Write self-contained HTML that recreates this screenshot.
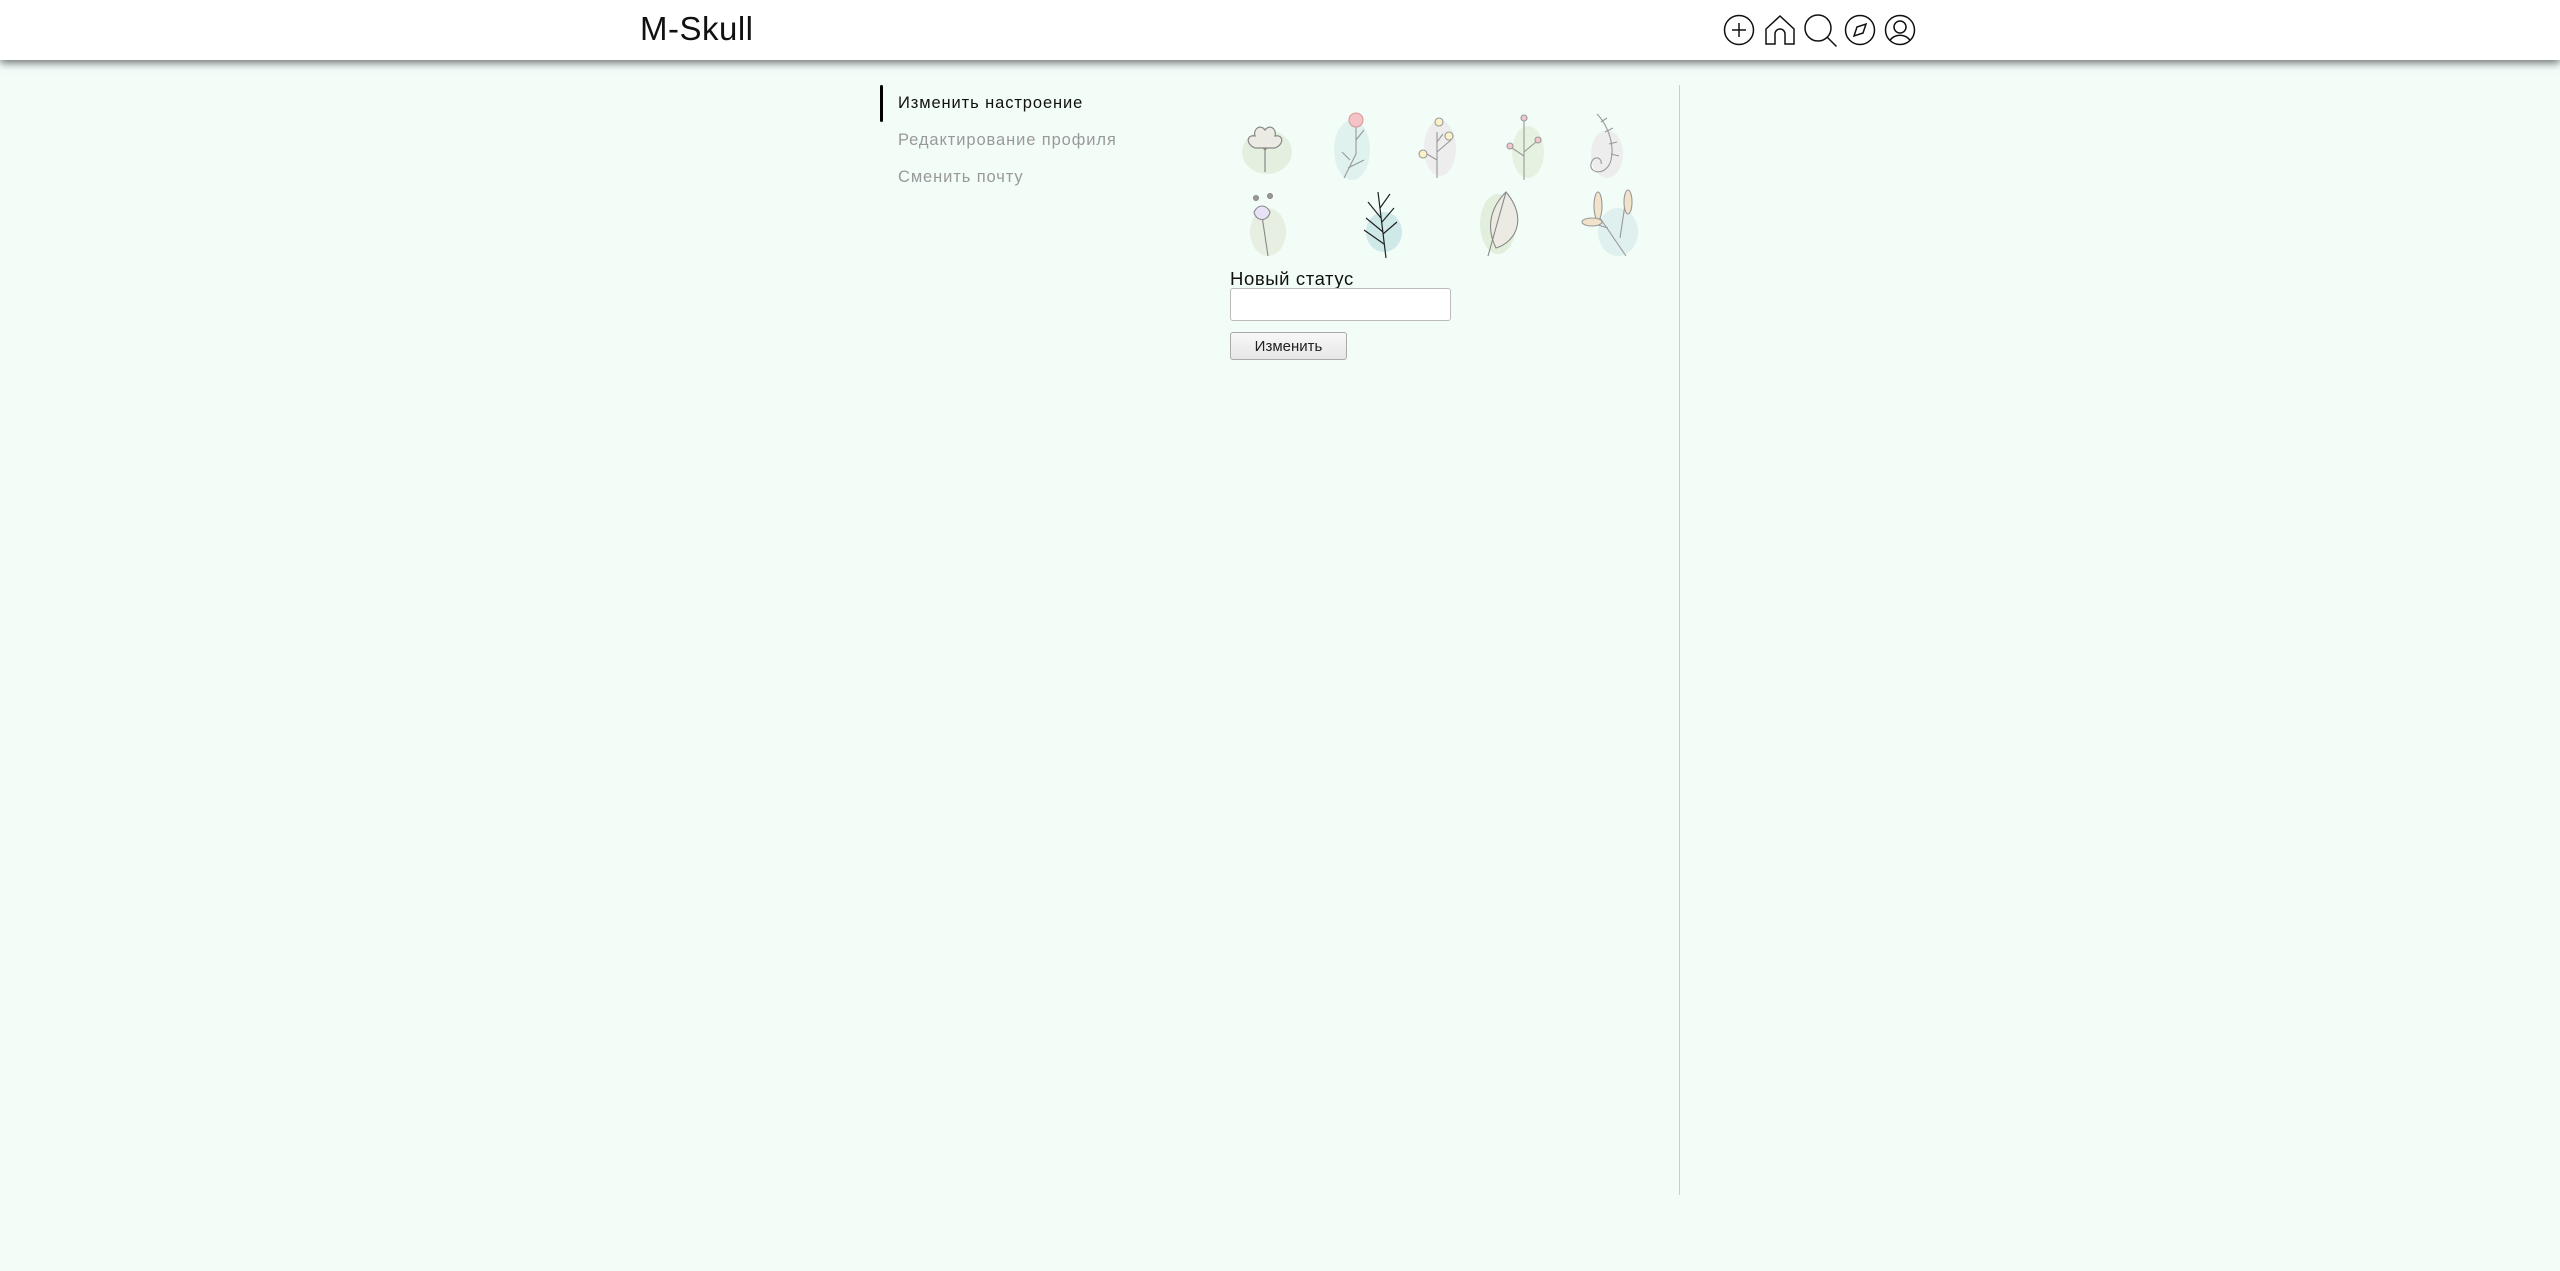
<!DOCTYPE html>
<html><head><meta charset="utf-8"><style>
*{margin:0;padding:0;box-sizing:border-box}
body{width:2560px;height:1271px;background:#f2fdf8;font-family:"Liberation Sans","DejaVu Sans",sans-serif;position:relative;overflow:hidden}
.hdr{position:absolute;left:0;top:0;width:2560px;height:60px;background:#fff;box-shadow:0 3px 8px rgba(0,0,0,.55)}
.logo{position:absolute;left:640px;top:10px;font-size:33px;color:#111;font-weight:300;letter-spacing:0.5px}
.ic{position:absolute;top:14px}
.nav{position:absolute;left:880px;top:85px;width:2.5px;height:37px;background:#000;border-radius:2px}
.it{position:absolute;left:898px;font-size:16.5px;color:#999;white-space:nowrap;letter-spacing:0.9px}
.vl{position:absolute;left:1679px;top:85px;width:1px;height:1110px;background:#ccc}
.lab{position:absolute;left:1230px;top:268px;font-size:18.5px;color:#111;letter-spacing:0.6px}
.inp{position:absolute;left:1230px;top:288px;width:221px;height:33px;background:#fff;border:1px solid #bbb;border-radius:3px}
.btn{position:absolute;left:1230px;top:332px;width:117px;height:28px;background:linear-gradient(#f8f8f8,#e6e6e6);border:1px solid #aaa;border-radius:3px;font-size:15px;color:#222;text-align:center;line-height:28px}
svg.f{position:absolute}
</style></head><body>
<div class="hdr">
<div class="logo">M-Skull</div>
<svg class="ic" style="left:1723px" width="32" height="32" viewBox="0 0 32 32" fill="none" stroke="#111" stroke-width="1.5"><circle cx="16" cy="16" r="14.5"/><path d="M16 9v14M9 16h14"/></svg>
<svg class="ic" style="left:1764px" width="32" height="32" viewBox="0 0 32 32" fill="none" stroke="#111" stroke-width="1.5"><path d="M2 15L16 2l14 13v15H21V20a5 5 0 0 0-10 0v10H2z"/></svg>
<svg class="ic" style="left:1804px" width="34" height="34" viewBox="0 0 34 34" fill="none" stroke="#111" stroke-width="1.5"><circle cx="14" cy="14" r="13"/><path d="M23.5 23.5l9 9"/></svg>
<svg class="ic" style="left:1844px" width="32" height="32" viewBox="0 0 32 32" fill="none" stroke="#111" stroke-width="1.5"><circle cx="16" cy="16" r="14.5"/><path d="M10 22l3-9 9-3-3 9z"/></svg>
<svg class="ic" style="left:1884px" width="32" height="32" viewBox="0 0 32 32" fill="none" stroke="#111" stroke-width="1.5"><circle cx="16" cy="16" r="14.5"/><circle cx="16" cy="13" r="6"/><path d="M6 26.5a11 9 0 0 1 20 0"/></svg>
</div>
<div class="nav"></div>
<div class="it" style="top:94px;color:#111">Изменить настроение</div>
<div class="it" style="top:131px">Редактирование профиля</div>
<div class="it" style="top:168px">Сменить почту</div>
<div class="vl"></div>

<svg class="f" style="left:1235px;top:110px" width="70" height="75" fill="none" stroke="#888" stroke-width="1.2"><ellipse cx="32" cy="42" rx="25" ry="22" fill="#e3f0e0" stroke="none"/><path d="M30 62V30M30 40l-12-14M30 40l12-12" /><path d="M20 38c-10-4-8-14 0-12-2-8 6-12 10-6 4-6 12-2 10 6 8-2 10 8 0 12z" fill="#ecebe3"/></svg>
<svg class="f" style="left:1330px;top:110px" width="50" height="75" fill="none" stroke="#999" stroke-width="1.1"><ellipse cx="22" cy="40" rx="18" ry="30" fill="#dff2ee" stroke="none"/><path d="M26 14v30l-12 24M26 30l8-10M20 50l-8-8M18 58l16-8"/><circle cx="26" cy="10" r="7" fill="#f4c3c8" stroke="#d99"/></svg>
<svg class="f" style="left:1415px;top:112px" width="50" height="70" fill="none" stroke="#999" stroke-width="1.1"><ellipse cx="25" cy="36" rx="16" ry="28" fill="#ecedec" stroke="none"/><path d="M22 66V20M22 40l14-12M22 48l-10-6M22 30l6-8"/><circle cx="24" cy="10" r="4" fill="#fbf2c8"/><circle cx="34" cy="24" r="4" fill="#fbf2c8"/><circle cx="8" cy="42" r="4" fill="#fbf2c8"/></svg>
<svg class="f" style="left:1500px;top:112px" width="50" height="70" fill="none" stroke="#999" stroke-width="1.1"><ellipse cx="28" cy="40" rx="16" ry="26" fill="#e6f2e1" stroke="none"/><path d="M24 68V8M24 40l12-10M24 44l-12-8"/><circle cx="24" cy="6" r="3" fill="#f3c7cd"/><circle cx="38" cy="28" r="3" fill="#f3c7cd"/><circle cx="10" cy="34" r="3" fill="#f3c7cd"/></svg>
<svg class="f" style="left:1585px;top:110px" width="55" height="72" fill="none" stroke="#999" stroke-width="1.1"><ellipse cx="22" cy="44" rx="16" ry="24" fill="#ecedec" stroke="none"/><path d="M12 4c10 10 18 30 14 46s-22 14-20 4 12-6 10 0"/><path d="M16 12l6-4M20 22l8-4M24 34l8-2M26 44l8 2"/></svg>

<svg class="f" style="left:1240px;top:188px" width="50" height="72" fill="none" stroke="#888" stroke-width="1.1"><ellipse cx="28" cy="44" rx="18" ry="24" fill="#e7efe2" stroke="none"/><path d="M28 68L22 28"/><path d="M14 24c4-8 12-8 16 0-2 10-14 10-16 0z" fill="#e7e2f6"/><circle cx="16" cy="10" r="2.5" fill="#999"/><circle cx="30" cy="8" r="2.5" fill="#999"/></svg>
<svg class="f" style="left:1360px;top:188px" width="50" height="72" fill="none" stroke="#222" stroke-width="1.2"><ellipse cx="24" cy="44" rx="18" ry="20" fill="#cfe9e8" stroke="none"/><path d="M26 70L18 4M20 20l10-14M22 34l12-14M23 46l14-12M21 30L8 14M23 44L6 30M24 56L4 42"/></svg>
<svg class="f" style="left:1470px;top:188px" width="55" height="72" fill="none" stroke="#888" stroke-width="1.1"><ellipse cx="28" cy="36" rx="18" ry="30" fill="#e1efdc" stroke="none"/><path d="M36 4C58 30 46 54 26 60 16 40 20 20 36 4z" fill="#ecebe3"/><path d="M36 4L18 68"/></svg>
<svg class="f" style="left:1580px;top:188px" width="60" height="72" fill="none" stroke="#999" stroke-width="1.1"><ellipse cx="38" cy="44" rx="20" ry="24" fill="#dff0ee" stroke="none"/><path d="M46 68L20 30M28 40L8 34M40 50l6-40"/><ellipse cx="18" cy="18" rx="4" ry="14" fill="#f1e2cb"/><ellipse cx="48" cy="14" rx="4" ry="12" fill="#f1e2cb"/><ellipse cx="12" cy="34" rx="10" ry="4" fill="#f1e2cb"/></svg>

<div class="lab">Новый статус</div>
<div class="inp"></div>
<div class="btn">Изменить</div>
</body></html>
